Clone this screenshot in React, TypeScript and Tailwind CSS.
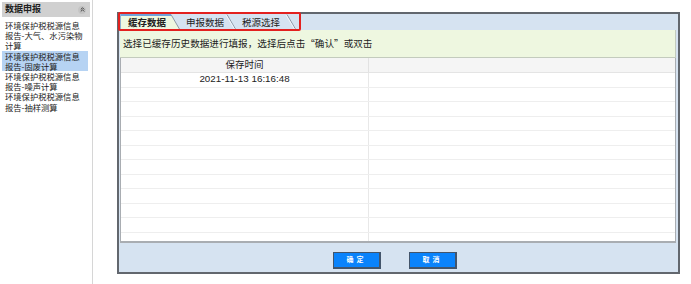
import { ChevronsUp } from 'lucide-react';

const menuItems = [
  { lines: ['环境保护税税源信息', '报告-大气、水污染物', '计算'], active: false },
  { lines: ['环境保护税税源信息', '报告-固废计算'], active: true },
  { lines: ['环境保护税税源信息', '报告-噪声计算'], active: false },
  { lines: ['环境保护税税源信息', '报告-抽样测算'], active: false },
];

const tabs = [
  { label: '缓存数据', width: 60, pad: 8, active: true },
  { label: '申报数据', width: 56, pad: 6, active: false },
  { label: '税源选择', width: 60, pad: 6, active: false },
];

const rows = ['2021-11-13 16:16:48', '', '', '', '', '', '', '', '', '', '', '', ''];

function Tab({ label, width, pad, active }: { label: string; width: number; pad: number; active: boolean }) {
  return (
    <div className="relative h-[16px] shrink-0" style={{ width }}>
      <svg className="absolute inset-0" width={width} height={16} viewBox={`0 0 ${width} 16`}>
        {active && (
          <>
            <polygon points={`0,0 ${width - 9},0 ${width},16 0,16`} fill="#eef7e0" />
            <line x1="0" y1="1" x2={width - 9} y2="1" stroke="#6fa2da" strokeWidth="2" />
            <line x1="0.5" y1="0" x2="0.5" y2="16" stroke="#8fb0d2" strokeWidth="1" />
          </>
        )}
        <line x1={width - 9} y1="0.5" x2={width} y2="16" stroke="#8c98a6" strokeWidth="1" />
        {!active && <line x1={width - 10} y1="1" x2={width - 1} y2="16" stroke="#f2f6fb" strokeWidth="1" />}
      </svg>
      <span
        className={`relative block pt-[3px] text-[9.5px] leading-[12px] text-[#222] ${active ? 'font-bold' : ''}`}
        style={{ paddingLeft: pad }}
      >
        {label}
      </span>
    </div>
  );
}

export default function App() {
  return (
    <div className="flex h-[284px] w-[691px] overflow-hidden bg-white font-['Liberation_Sans','Noto_Sans_CJK_SC',sans-serif] text-[#222]">
      {/* Sidebar */}
      <aside className="w-[93px] shrink-0 border-r border-[#d6d6d6] pl-[2px] pt-[2px]">
        <div className="flex h-[15px] w-[88px] items-center justify-between bg-[#d0d0d0] pl-[3px] pr-[4px]">
          <span className="text-[9px] font-bold leading-none text-[#222]">数据申报</span>
          <span className="flex h-[8px] w-[8px] items-center justify-center rounded-full bg-[#c4c4c4]">
            <ChevronsUp size={7} strokeWidth={3} className="text-[#333]" />
          </span>
        </div>
        <div className="mt-[3px] w-[86px] font-['Noto_Sans_CJK_SC',sans-serif]">
          {menuItems.map((item, i) => (
            <div
              key={i}
              className={`pl-[3px] text-[8.3px] leading-[10.2px] ${item.active ? 'bg-[#b6d3f3]' : ''}`}
            >
              {item.lines.map((l, j) => (
                <div key={j} className="h-[10.2px] whitespace-nowrap">{l}</div>
              ))}
            </div>
          ))}
        </div>
      </aside>

      {/* Main */}
      <main className="pl-[24px] pt-[12px]">
        <div className="relative flex h-[262px] w-[563px] flex-col border-2 border-[#62676e] bg-[#d6e3f1]">
          {/* Tabs */}
          <div className="flex h-[16px] pl-[1px]">
            {tabs.map(t => (
              <Tab key={t.label} {...t} />
            ))}
          </div>

          {/* annotation box */}
          <div className="absolute left-[-1px] top-[-2px] h-[19px] w-[183px] rounded-[2px] border-2 border-[#e3211f]" />

          {/* info bar */}
          <div className="ml-[1px] mr-[2px] flex h-[28px] items-center border-b border-r border-[#c3cbbd] bg-[#eef7e0] pl-[3px] font-['Noto_Sans_CJK_SC',sans-serif] text-[9.6px] text-[#222]">
            选择已缓存历史数据进行填报，选择后点击“确认”或双击
          </div>

          {/* grid */}
          <div className="ml-[1px] mr-[2px] h-[185px] overflow-hidden border-x border-b-2 border-[#a9adb2] bg-white">
            <div className="flex h-[15px] border-b border-[#e4e4e4] bg-[#f5f5f5]">
              <div className="flex w-[248px] items-center justify-center border-r border-[#e2e2e2] text-[9.5px]">保存时间</div>
              <div className="flex-1" />
            </div>
            {rows.map((r, i) => (
              <div key={i} className="flex h-[14.5px] border-b border-[#eeeeee]">
                <div className="flex w-[248px] items-center justify-center border-r border-[#e8e8e8] text-[9.8px]">{r}</div>
                <div className="flex-1" />
              </div>
            ))}
          </div>

          {/* buttons */}
          <div className="flex flex-1 justify-center gap-[28px] pr-[7px] pt-[9px]">
            <button className="flex h-[17px] w-[48px] items-center justify-center border border-b-2 border-r-2 border-[#43556b] bg-[#0a83fb] text-[7px] font-bold tracking-[3px] text-white">
              确定
            </button>
            <button className="flex h-[17px] w-[48px] items-center justify-center border border-b-2 border-r-2 border-[#43556b] bg-[#0a83fb] text-[7px] font-bold tracking-[3px] text-white">
              取消
            </button>
          </div>
        </div>
      </main>
    </div>
  );
}
